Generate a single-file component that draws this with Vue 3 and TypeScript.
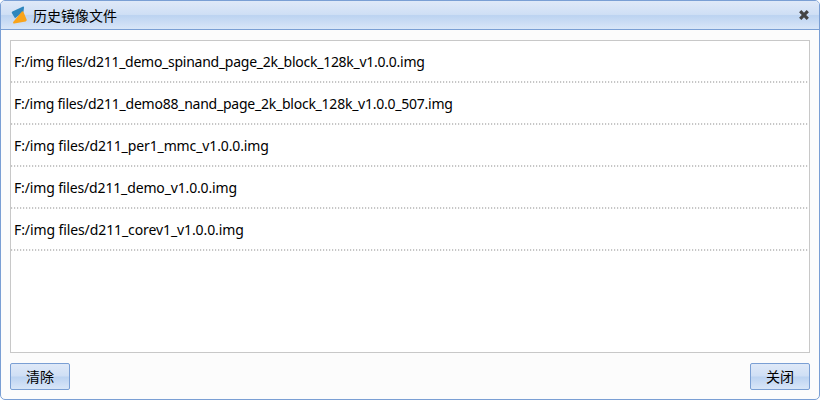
<script setup lang="ts">
import { ref } from 'vue'

interface ImageFile {
  path: string
  tracking: number
}

const files = ref<ImageFile[]>([
  { path: 'F:/img files/d211_demo_spinand_page_2k_block_128k_v1.0.0.img', tracking: -0.265 },
  { path: 'F:/img files/d211_demo88_nand_page_2k_block_128k_v1.0.0_507.img', tracking: -0.24 },
  { path: 'F:/img files/d211_per1_mmc_v1.0.0.img', tracking: -0.12 },
  { path: 'F:/img files/d211_demo_v1.0.0.img', tracking: -0.15 },
  { path: 'F:/img files/d211_corev1_v1.0.0.img', tracking: -0.1 },
])

function clearFiles(): void {
  files.value = []
}
</script>

<template>
  <div class="dialog">
    <header class="titlebar">
      <svg class="logo" viewBox="0 0 18 20" width="18" height="20">
        <path d="M1.8 8Q1.4 7 2.4 6.4L12.6 1.7Q14.2 1.2 14 2.8L13.4 7 5 13.2Z" fill="#2e86bd" />
        <path d="M11.9 6.6Q13 5.8 13.5 7L16.6 14.6Q17 16.1 15.6 16.5L4.2 18.6Q2.3 18.5 3.2 17Z" fill="#f9a41b" />
      </svg>
      <span class="title">历史镜像文件</span>
      <svg class="close" viewBox="0 0 12 12" width="12" height="12">
        <path d="M2.2 2.2 9.8 9.8M9.8 2.2 2.2 9.8" stroke="#444" stroke-width="3.2" />
      </svg>
    </header>
    <ul class="list">
      <li v-for="file in files" :key="file.path" class="row" :style="{ letterSpacing: file.tracking + 'px' }">{{ file.path }}</li>
    </ul>
    <footer class="actions">
      <button class="btn" type="button" @click="clearFiles">清除</button>
      <button class="btn" type="button">关闭</button>
    </footer>
  </div>
</template>

<style>
body {
  background: #fff;
}
</style>

<style scoped>
.dialog {
  box-sizing: border-box;
  display: flex;
  flex-direction: column;
  width: 820px;
  height: 400px;
  border: 1px solid #7a9fd4;
  border-radius: 5px;
  background: #fcfcfc;
  overflow: hidden;
  color: #000;
  font: 14px/20px "Noto Sans", "Noto Sans CJK SC", sans-serif;
}
.titlebar {
  box-sizing: border-box;
  display: flex;
  align-items: center;
  flex: none;
  height: 29px;
  padding: 0 9px;
  border-bottom: 1px solid #7a9fd4;
  background: linear-gradient(#dfe9f8 0%, #cfdff5 48%, #bcd3f1 52%, #d9e6f8 100%);
}
.logo {
  flex: none;
  margin-right: 5px;
}
.title {
  flex: 1;
  padding-top: 2px;
}
.close {
  flex: none;
}
.list {
  box-sizing: border-box;
  flex: none;
  height: 313px;
  margin: 10px 9px;
  padding: 0;
  border: 1px solid #c8c8c8;
  background: #fff;
  list-style: none;
}
.row {
  box-sizing: border-box;
  height: 42px;
  padding: 11px 3px;
  background: repeating-linear-gradient(90deg, #c6c6c6 0 1px, #f4f4f4 1px 2px, #fff 2px 3px) 0 100% / 100% 2px no-repeat;
  white-space: nowrap;
}
.actions {
  display: flex;
  justify-content: space-between;
  padding: 0 9px;
}
.btn {
  box-sizing: border-box;
  width: 60px;
  height: 27px;
  padding: 0;
  border: 1px solid #7a9fd4;
  border-radius: 2px;
  background: linear-gradient(#dfe9f8 0%, #cfdff5 48%, #bcd3f1 52%, #d9e6f8 100%);
  color: #000;
  font: inherit;
}
</style>
